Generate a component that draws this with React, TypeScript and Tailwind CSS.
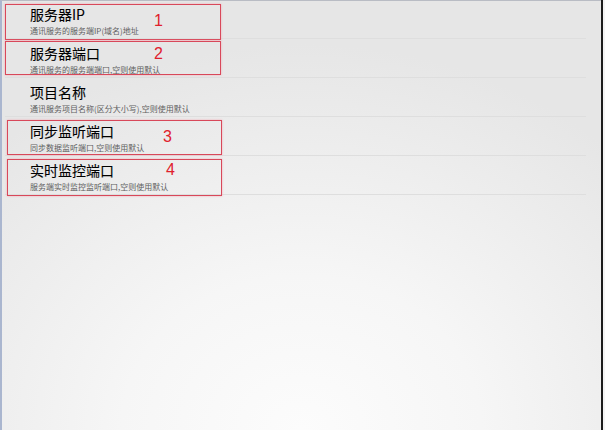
import React from "react";

const rows = [
  { t: "服务器IP", s: "通讯服务的服务端IP(域名)地址" },
  { t: "服务器端口", s: "通讯服务的服务端端口,空则使用默认" },
  { t: "项目名称", s: "通讯服务项目名称(区分大小写),空则使用默认" },
  { t: "同步监听端口", s: "同步数据监听端口,空则使用默认" },
  { t: "实时监控端口", s: "服务端实时监控监听端口,空则使用默认" },
];

const boxes = [
  { cls: "left-[3px] top-[3px] w-[216px] h-[36px]", n: "1", ncls: "left-[148px] top-[8px]" },
  { cls: "left-[3px] top-[40px] w-[216px] h-[34px]", n: "2", ncls: "left-[148px] top-[4px]" },
  { cls: "left-[5px] top-[119px] w-[215px] h-[35px]", n: "3", ncls: "left-[155px] top-[8px]" },
  { cls: "left-[5px] top-[158px] w-[215px] h-[37px]", n: "4", ncls: "left-[158px] top-[2px]" },
];

export default function App() {
  return (
    <div
      className="w-[605px] h-[430px] flex overflow-hidden"
      style={{ fontFamily: '"Noto Sans CJK SC", "Noto Sans", sans-serif' }}
    >
      <div className="flex-1 h-full border-l-[2px] border-l-[#aab6cf] border-t border-t-[#b9bcc4] bg-[radial-gradient(ellipse_75%_90%_at_50%_100%,#fcfcfc_0%,#f6f6f6_40%,#e6e6e6_100%)] relative">
        <div className="flex flex-col pr-[15px] pl-[3px] -mt-px">
          {rows.map((r, i) => (
            <div
              key={i}
              className="h-[39px] border-b border-b-[#dedede] pl-[25px] pt-[7px] flex flex-col"
            >
              <div className="text-[14px] leading-[14px] text-[#000000] [-webkit-text-stroke:0.1px_#000]">{r.t}</div>
              <div className="text-[8px] leading-[8px] text-[#606060] mt-[6px]">{r.s}</div>
            </div>
          ))}
        </div>
        {boxes.map((b, i) => (
          <div
            key={i}
            className={`absolute border border-[#d8485a] shadow-[0_0_2px_#f2aab4] ${b.cls}`}
          >
            <span
              className={`absolute text-[16px] leading-[16px] text-[#e0202c] ${b.ncls}`}
              style={{ fontFamily: '"Liberation Sans", sans-serif' }}
            >
              {b.n}
            </span>
          </div>
        ))}
      </div>
      <div className="w-[2px] h-full bg-[#1c1c1c]" />
      <div className="w-[2px] h-full bg-[#f4f4f4]" />
    </div>
  );
}
